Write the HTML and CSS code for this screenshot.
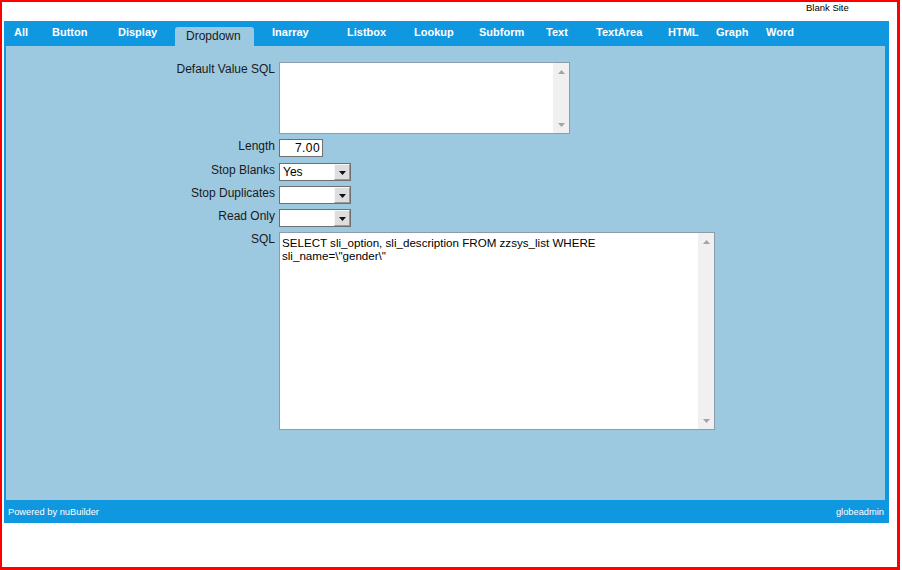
FILE: index.html
```html
<!DOCTYPE html>
<html>
<head>
<meta charset="utf-8">
<link rel="stylesheet" href="styles.css">
</head>
<body>
<div class="frame">
  <div class="site-bar"><span class="site-name">Blank Site</span></div>
  <div class="app">
    <div class="tabs">
      <span class="tab">All</span>
      <span class="tab">Button</span>
      <span class="tab">Display</span>
      <span class="tab tab-on"><span class="tab-on-box">Dropdown</span></span>
      <span class="tab">Inarray</span>
      <span class="tab">Listbox</span>
      <span class="tab">Lookup</span>
      <span class="tab">Subform</span>
      <span class="tab">Text</span>
      <span class="tab">TextArea</span>
      <span class="tab">HTML</span>
      <span class="tab">Graph</span>
      <span class="tab">Word</span>
    </div>
    <div class="panel">
      <div class="form">
        <label class="lbl">Default Value SQL</label>
        <div class="ta ta-small">
          <div class="ta-text"></div>
          <div class="ta-scroll">
            <span class="sb-btn"><svg width="7" height="4" viewBox="0 0 7 4"><path d="M0 4 L3.5 0 L7 4 Z" fill="#a4a4a4"/></svg></span>
            <span class="sb-btn"><svg width="7" height="4" viewBox="0 0 7 4"><path d="M0 0 L3.5 4 L7 0 Z" fill="#a4a4a4"/></svg></span>
          </div>
        </div>

        <label class="lbl">Length</label>
        <div class="inp inp-num">7.00</div>

        <label class="lbl">Stop Blanks</label>
        <div class="sel"><span class="sel-val">Yes</span><span class="sel-btn"><svg width="7" height="4" viewBox="0 0 7 4"><path d="M0 0 L3.5 4 L7 0 Z" fill="#111"/></svg></span></div>

        <label class="lbl">Stop Duplicates</label>
        <div class="sel"><span class="sel-val"></span><span class="sel-btn"><svg width="7" height="4" viewBox="0 0 7 4"><path d="M0 0 L3.5 4 L7 0 Z" fill="#111"/></svg></span></div>

        <label class="lbl">Read Only</label>
        <div class="sel"><span class="sel-val"></span><span class="sel-btn"><svg width="7" height="4" viewBox="0 0 7 4"><path d="M0 0 L3.5 4 L7 0 Z" fill="#111"/></svg></span></div>

        <label class="lbl">SQL</label>
        <div class="ta ta-big">
          <div class="ta-text ta-code">SELECT sli_option, sli_description FROM zzsys_list WHERE<br>sli_name=\"gender\"</div>
          <div class="ta-scroll">
            <span class="sb-btn"><svg width="7" height="4" viewBox="0 0 7 4"><path d="M0 4 L3.5 0 L7 4 Z" fill="#a4a4a4"/></svg></span>
            <span class="sb-btn"><svg width="7" height="4" viewBox="0 0 7 4"><path d="M0 0 L3.5 4 L7 0 Z" fill="#a4a4a4"/></svg></span>
          </div>
        </div>
      </div>
    </div>
    <div class="footer">
      <span>Powered by nuBuilder</span>
      <span>globeadmin</span>
    </div>
  </div>
</div>
</body>
</html>
```

FILE: styles.css
```css
html, body {
  margin: 0;
  padding: 0;
  background: #ffffff;
}

.frame {
  box-sizing: border-box;
  width: 900px;
  height: 570px;
  border-style: solid;
  border-color: #ff0000;
  border-width: 2px 3px 3px 2px;
  font-family: "Liberation Sans", Arial, sans-serif;
}

.site-bar {
  height: 19px;
  padding-left: 804px;
  font-size: 9.5px;
  line-height: 11px;
  color: #000;
}

.app {
  margin-left: 2px;
  width: 885px;
  background: #0f97df;
}

.tabs {
  display: grid;
  grid-template-columns: 38px 66px 57px 97px 75px 67px 65px 67px 50px 72px 48px 50px auto;
  align-items: end;
  height: 25px;
  padding-left: 10px;
  box-sizing: border-box;
}

.tab {
  color: #ffffff;
  font-weight: bold;
  font-size: 11px;
  line-height: 13px;
  align-self: center;
  white-space: nowrap;
  margin-top: -3px;
}

.tab-on {
  align-self: end;
  margin-top: 0;
}

.tab-on-box {
  display: block;
  width: 79px;
  height: 19px;
  box-sizing: border-box;
  padding-left: 11px;
  padding-top: 1px;
  background: #9dc9e0;
  border-radius: 3px 3px 0 0;
  color: #1a1a1a;
  font-weight: normal;
  font-size: 12px;
  line-height: 17px;
}

.panel {
  margin: 0 4px 0 2px;
  height: 454px;
  background: #9dc9e0;
  box-sizing: border-box;
  padding-top: 16px;
}

.form {
  display: grid;
  grid-template-columns: 269px auto;
  column-gap: 4px;
  row-gap: 5px;
  align-items: start;
  justify-items: start;
}

.lbl {
  justify-self: end;
  font-size: 12px;
  line-height: 14px;
  color: #1a1a1a;
  white-space: nowrap;
}

.ta {
  display: flex;
  box-sizing: border-box;
  background: #ffffff;
  border: 1px solid #8b9cab;
}

.ta-small {
  width: 291px;
  height: 72px;
}

.ta-big {
  width: 436px;
  height: 198px;
}

.ta-text {
  flex: 1;
  padding: 2px 2px;
  font-size: 12px;
  line-height: 13px;
  color: #000;
}

.ta-code {
  font-size: 11.6px;
  padding-top: 3px;
}

.ta-scroll {
  width: 16px;
  background: #f0f0f0;
  display: flex;
  flex-direction: column;
  justify-content: space-between;
}

.sb-btn {
  height: 17px;
  display: flex;
  align-items: center;
  justify-content: center;
}

.inp {
  box-sizing: border-box;
  height: 18px;
  background: #ffffff;
  border: 1px solid #6f6f6f;
  font-size: 12px;
  line-height: 16px;
  color: #000;
}

.inp-num {
  width: 44px;
  text-align: right;
  padding-right: 2px;
  margin-bottom: 1px;
  letter-spacing: 0.4px;
}

.sel {
  box-sizing: border-box;
  width: 72px;
  height: 18px;
  display: flex;
  background: #ffffff;
  border: 1px solid #6f6f6f;
}

.sel-val {
  flex: 1;
  padding-left: 3px;
  font-size: 12px;
  line-height: 16px;
  color: #000;
}

.sel-btn {
  width: 16px;
  box-sizing: border-box;
  display: flex;
  align-items: center;
  justify-content: center;
  background: #dedede;
  border: 1px solid #f7f7f7;
  border-right-color: #9a9a9a;
  border-bottom-color: #9a9a9a;
  padding-top: 2px;
}

.footer {
  height: 23px;
  display: flex;
  justify-content: space-between;
  align-items: center;
  padding: 0 5px 0 4px;
  color: #ffffff;
  font-size: 9.3px;
}
```
